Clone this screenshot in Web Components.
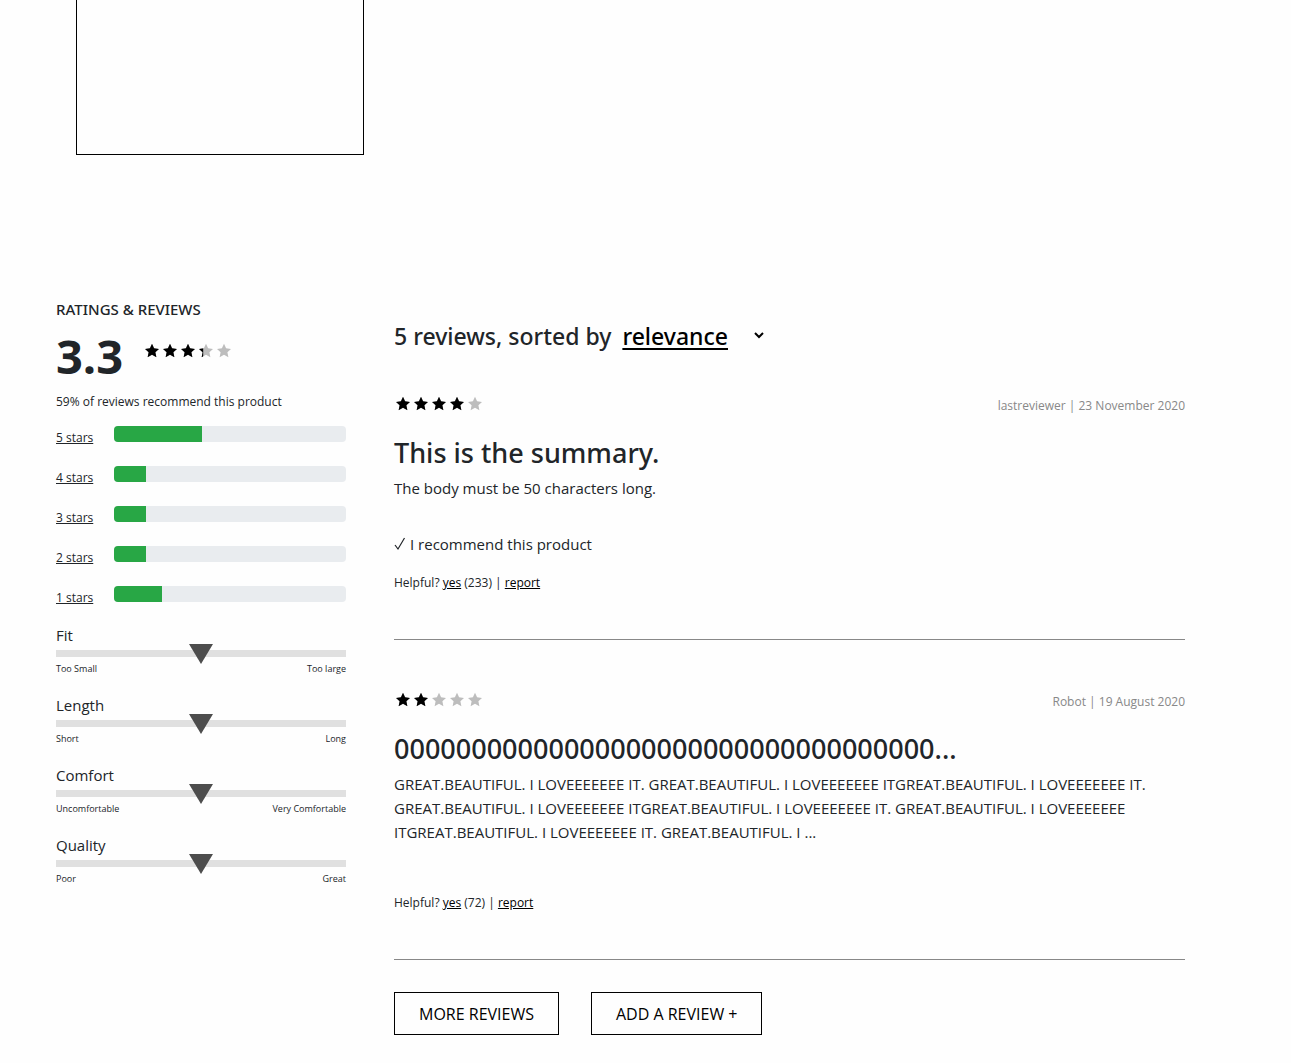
<!DOCTYPE html>
<html lang="en">
<head>
<meta charset="utf-8">
<title>Ratings &amp; Reviews</title>
<style>
  body { margin: 0; background: #fefefe; color: #212529; font: 15px/24px "Open Sans", "Noto Sans", sans-serif;
    --heading: "Noto Sans", "Open Sans", sans-serif; }
</style>
</head>
<body>
<product-page>
  <product-card slot="top"></product-card>
  <rating-summary slot="side" score="3.3" recommend="59">
    <rating-bar stars="5" value="38"></rating-bar>
    <rating-bar stars="4" value="14"></rating-bar>
    <rating-bar stars="3" value="14"></rating-bar>
    <rating-bar stars="2" value="14"></rating-bar>
    <rating-bar stars="1" value="20.5"></rating-bar>
    <trait-scale slot="traits" low="Too Small" high="Too large">Fit</trait-scale>
    <trait-scale slot="traits" low="Short" high="Long">Length</trait-scale>
    <trait-scale slot="traits" low="Uncomfortable" high="Very Comfortable">Comfort</trait-scale>
    <trait-scale slot="traits" low="Poor" high="Great">Quality</trait-scale>
  </rating-summary>
  <review-list count="5">
    <review-item stars="4" author="lastreviewer" date="23 November 2020" helpful="233" recommended>
      <span slot="title">This is the summary.</span>
      The body must be 50 characters long.
    </review-item>
    <review-item stars="2" author="Robot" date="19 August 2020" helpful="72">
      <span slot="title">00000000000000000000000000000000000...</span>
      GREAT.BEAUTIFUL. I LOVEEEEEEE IT. GREAT.BEAUTIFUL. I LOVEEEEEEE ITGREAT.BEAUTIFUL. I LOVEEEEEEE IT.<br>
      GREAT.BEAUTIFUL. I LOVEEEEEEE ITGREAT.BEAUTIFUL. I LOVEEEEEEE IT. GREAT.BEAUTIFUL. I LOVEEEEEEE<br>
      ITGREAT.BEAUTIFUL. I LOVEEEEEEE IT. GREAT.BEAUTIFUL. I ...
    </review-item>
    <outline-button slot="actions">MORE REVIEWS</outline-button>
    <outline-button slot="actions">ADD A REVIEW +</outline-button>
  </review-list>
</product-page>

<script>
const define = (name, render) => customElements.define(name, class extends HTMLElement {
  constructor() {
    super();
    this.attachShadow({ mode: 'open' });
  }
  connectedCallback() {
    this.shadowRoot.innerHTML = '<style>*{box-sizing:border-box}:host{display:block}</style>' + render(this);
  }
});
const attr = (el, name) => el.getAttribute(name);

define('product-page', () => `
  <style>
    .top { padding-left: 76px; }
    .columns { display: grid; grid-template-columns: 290px minmax(0, 1fr); gap: 48px; align-items: start;
      padding: 142px 106px 28px 56px; }
    .main { padding-top: 23px; }
  </style>
  <div class="top"><slot name="top"></slot></div>
  <main class="columns"><slot name="side"></slot><div class="main"><slot></slot></div></main>`);

define('product-card', () => `
  <style>:host { width: 288px; height: 155px; box-sizing: border-box; border: 1px solid #000; border-top: 0; }</style>`);

define('star-rating', el => {
  const value = Number(attr(el, 'value'));
  const star = 'M8 .8 10.1 5.3 15 5.9 11.4 9.3 12.4 14.2 8 11.8 3.6 14.2 4.6 9.3 1 5.9 5.9 5.3Z';
  const stars = [0, 1, 2, 3, 4].map(i => {
    const part = Math.max(0, Math.min(1, value - i));
    return `<svg width="18" height="16" viewBox="-1 0 18 16"><path d="${star}" fill="#bdbdbd"/>
      <path d="${star}" fill="#000" style="clip-path:inset(0 ${Math.round((1 - part) * 100)}% 0 0)"/></svg>`;
  }).join('');
  return `<style>:host { display: flex; } svg { display: block; }</style>${stars}`;
});

define('rating-summary', el => `
  <style>
    h2 { margin: 0; font-family: var(--heading); font-size: 15px; line-height: 24px; font-weight: 500; }
    .score { display: flex; gap: 20px; margin-top: 6px; }
    strong { font-size: 47px; line-height: 58px; font-weight: 700; }
    star-rating { margin-top: 16px; }
    p { margin: 7px 0 14px; font-size: 12px; line-height: 20px; }
    .bars { display: grid; gap: 16px; }
    .traits { display: grid; gap: 16px; margin-top: 13px; }
  </style>
  <h2>RATINGS &amp; REVIEWS</h2>
  <div class="score"><strong>${attr(el, 'score')}</strong><star-rating value="${attr(el, 'score')}"></star-rating></div>
  <p>${attr(el, 'recommend')}% of reviews recommend this product</p>
  <div class="bars"><slot></slot></div>
  <div class="traits"><slot name="traits"></slot></div>`);

define('rating-bar', el => `
  <style>
    :host { display: flex; height: 24px; }
    a { flex: 0 0 58px; color: inherit; font-size: 12px; text-underline-offset: 1px; }
    .track { flex: 1; height: 16px; border-radius: 4px; background: #e9ecef; overflow: hidden; }
    .fill { height: 100%; width: ${attr(el, 'value')}%; background: #28a745; }
  </style>
  <a href="#">${attr(el, 'stars')} stars</a>
  <div class="track"><div class="fill"></div></div>`);

define('trait-scale', el => `
  <style>
    .track { display: flex; justify-content: center; align-items: center; height: 7px; margin: 3px 0 4px; background: #e0e0e0; }
    svg { flex: none; }
    .ends { display: flex; justify-content: space-between; font-size: 9px; line-height: 16px; }
  </style>
  <div><slot></slot></div>
  <div class="track"><svg width="24" height="20"><path d="M0 0H24L12 20Z" fill="#4d4d4d"/></svg></div>
  <div class="ends"><span>${attr(el, 'low')}</span><span>${attr(el, 'high')}</span></div>`);

define('review-list', el => `
  <style>
    h3 { display: flex; align-items: center; gap: 11px; margin: 0 0 42px; font-family: var(--heading); font-size: 23px; line-height: 32px; font-weight: 500; }
    .sort { display: grid; align-items: center; }
    select { grid-area: 1 / 1; appearance: none; border: 0; margin: 0; padding: 0 38px 0 0; background: none; color: #000;
      font: inherit; text-decoration: underline 2px; text-underline-offset: 3px; }
    svg { grid-area: 1 / 1; justify-self: end; pointer-events: none; }
    .actions { display: flex; gap: 32px; margin-top: -18px; }
  </style>
  <h3><label for="sort">${attr(el, 'count')} reviews, sorted by</label>
    <span class="sort"><select id="sort"><option>relevance</option><option>newest</option><option>helpful</option></select>
    <svg width="14" height="12"><path d="M3 3 7 7 11 3" fill="none" stroke="#000" stroke-width="2"/></svg></span></h3>
  <slot></slot>
  <div class="actions"><slot name="actions"></slot></div>`);

define('review-item', el => `
  <style>
    :host { margin-bottom: 50px; padding-bottom: 46px; border-bottom: 1px solid #888; }
    header { display: flex; justify-content: space-between; height: 24px; }
    star-rating { margin-top: 2px; }
    .meta { color: #888; font-size: 12px; }
    h4 { margin: 18px 0 6px; font-family: var(--heading); font-size: 27px; line-height: 34px; font-weight: 500; }
    p { margin: 0; }
    .recommend { display: flex; align-items: center; gap: 4px; margin-top: 32px; }
    .helpful { margin-top: ${el.hasAttribute('recommended') ? 17 : 49}px; font-size: 12px; line-height: 20px; }
    a { color: #000; text-underline-offset: 1px; }
  </style>
  <header><star-rating value="${attr(el, 'stars')}"></star-rating>
    <span class="meta">${attr(el, 'author')} | ${attr(el, 'date')}</span></header>
  <h4><slot name="title"></slot></h4>
  <p><slot></slot></p>
  ${el.hasAttribute('recommended') ? `<p class="recommend"><svg width="12" height="14" aria-hidden="true"><path d="M1 8 4 12 10.500 1" fill="none" stroke="#212529" stroke-width="1.200"/></svg>I recommend this product</p>` : ''}
  <p class="helpful">Helpful? <a href="#">yes</a> (${attr(el, 'helpful')}) | <a href="#">report</a></p>`);

define('outline-button', () => `
  <style>
    button { display: block; height: 43px; padding: 0 24px; border: 1px solid #000; background: transparent; color: #000;
      font: inherit; font-size: 16px; white-space: nowrap; }
  </style>
  <button type="button"><slot></slot></button>`);
</script>
</body>
</html>
